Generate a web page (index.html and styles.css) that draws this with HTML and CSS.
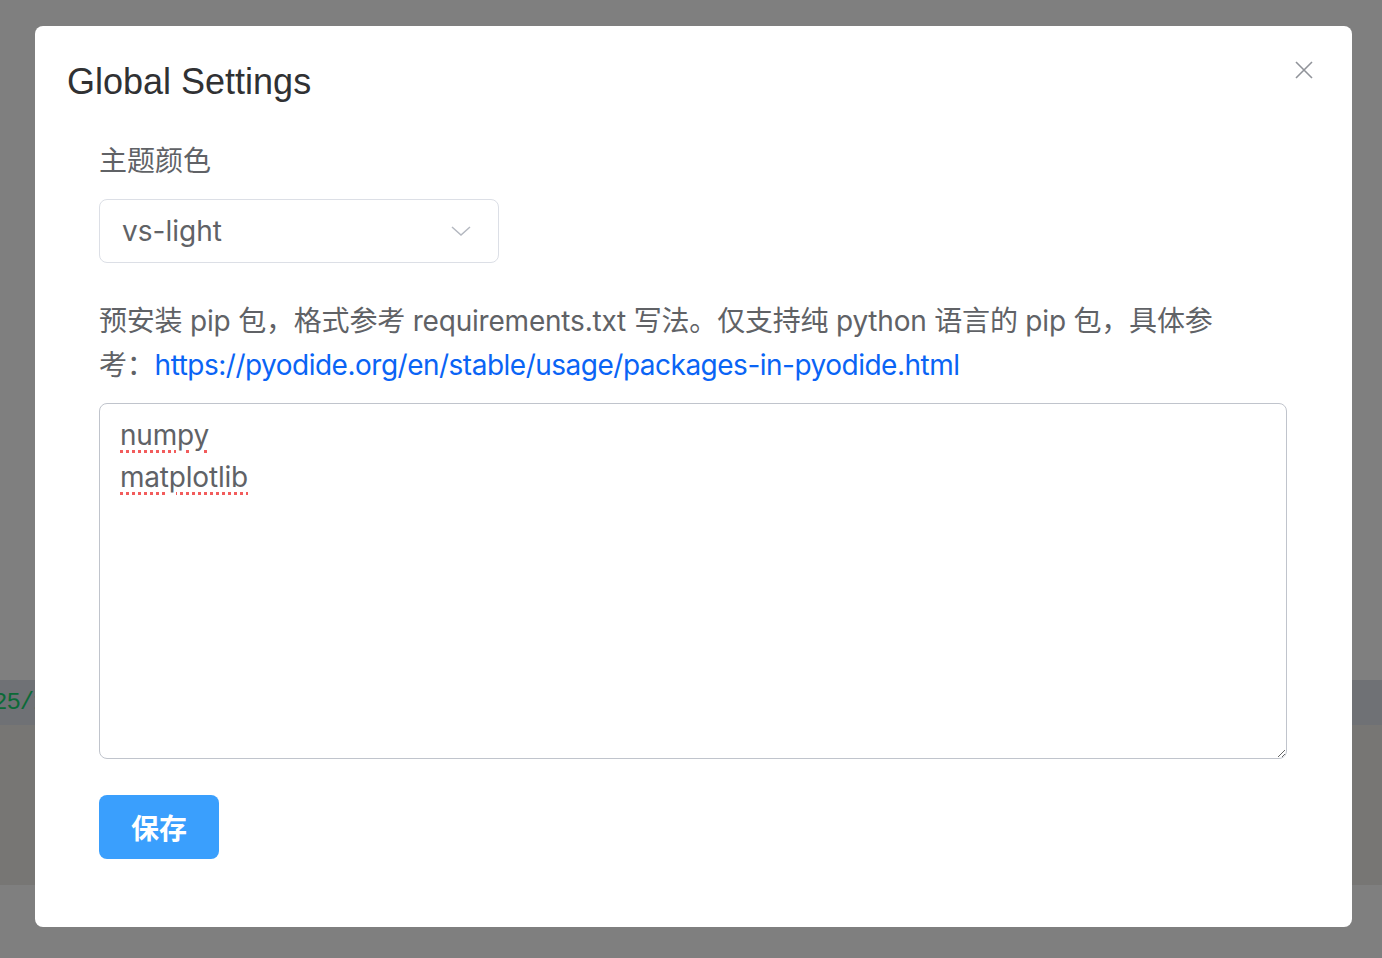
FILE: index.html
```html
<!DOCTYPE html>
<html lang="zh-CN">
<head>
<meta charset="utf-8">
<title>Global Settings</title>
<link rel="stylesheet" href="styles.css">
</head>
<body>
<div class="page">
  <div class="page-top"></div>
  <div class="page-band"><span class="page-code">25/1</span></div>
  <div class="page-mid"></div>
</div>
<div class="overlay">
  <div class="dialog" role="dialog" aria-label="Global Settings">
    <header class="dialog-header">
      <h2 class="dialog-title">Global Settings</h2>
      <button class="dialog-close" aria-label="关闭">
        <svg viewBox="0 0 18 18" width="18" height="18"><path d="M1 1L17 17M17 1L1 17" stroke="#909399" stroke-width="1.6" fill="none"/></svg>
      </button>
    </header>
    <div class="dialog-body">
      <div class="field-label">主题颜色</div>
      <div class="select">
        <span class="select-value">vs-light</span>
        <svg class="select-arrow" viewBox="0 0 20 10" width="20" height="10"><path d="M1 1L10 9L19 1" stroke="#b4b8c0" stroke-width="1.5" fill="none"/></svg>
      </div>
      <p class="desc">预安装 pip 包，格式参考 requirements.txt 写法。仅支持纯 python 语言的 pip 包，具体参考：<a class="desc-link" href="#">https://pyodide.org/en/stable/usage/packages-in-pyodide.html</a></p>
      <textarea class="packages" spellcheck="false">numpy
matplotlib</textarea>
      <button class="btn-primary">保存</button>
    </div>
  </div>
</div>
</body>
</html>
```
FILE: styles.css
```css
* { box-sizing: border-box; }
html, body { margin: 0; height: 100%; }
body {
  background: #7f7f7f;
  font-family: Inter, "Noto Sans CJK SC", sans-serif;
  overflow: hidden;
}
.page-top { height: 680px; }
.page-band {
  height: 45px;
  background: #6f7175;
  display: flex;
  align-items: center;
  overflow: hidden;
}
.page-code {
  font-family: "Liberation Mono", monospace;
  font-size: 24px;
  color: #0b6a37;
  margin-left: -7px;
  letter-spacing: -1px;
}
.page-mid { height: 160px; background: #777674; }

.overlay { position: fixed; inset: 0; }
.dialog {
  position: relative;
  margin: 26px 0 0 35px;
  width: 1317px;
  height: 901px;
  background: #fff;
  border-radius: 8px;
}
.dialog-header { padding: 32px 32px 0; }
.dialog-title {
  margin: 0;
  font-family: "Liberation Sans", Arial, sans-serif;
  font-weight: 400;
  font-size: 36px;
  line-height: 48px;
  color: #303133;
}
.dialog-close {
  position: absolute;
  top: 35px;
  right: 39px;
  width: 18px;
  height: 18px;
  padding: 0;
  border: 0;
  background: none;
  display: flex;
}
.dialog-body {
  padding: 35px 64px 0;
  display: flex;
  flex-direction: column;
  align-items: flex-start;
}
.field-label {
  font-size: 28px;
  line-height: 40px;
  color: #606266;
}
.select {
  margin-top: 18px;
  width: 400px;
  height: 64px;
  border: 1px solid #dcdfe6;
  border-radius: 8px;
  padding: 0 27px 0 22px;
  display: flex;
  align-items: center;
  justify-content: space-between;
}
.select-value { font-size: 28px; color: #606266; }
.desc {
  margin: 36px 0 0;
  max-width: 1140px;
  font-size: 28px;
  line-height: 44px;
  color: #606266;
  letter-spacing: -0.2px;
}
.desc-link { color: #0a64f5; text-decoration: none; letter-spacing: -0.5px; }
.packages {
  margin-top: 16px;
  width: 1188px;
  height: 356px;
  border: 1px solid #c0c4cc;
  border-radius: 8px;
  padding: 10px 20px;
  font-family: Inter, "Noto Sans CJK SC", sans-serif;
  font-size: 28px;
  line-height: 42px;
  color: #606266;
  letter-spacing: -0.2px;
  resize: vertical;
  outline: none;
  text-decoration: underline dotted #f25c5c;
  text-decoration-thickness: 3px;
  text-underline-offset: 5px;
}
.btn-primary {
  margin-top: 36px;
  width: 120px;
  height: 64px;
  border: 0;
  border-radius: 8px;
  background: #3a9ffd;
  color: #fff;
  font-family: "Noto Sans CJK SC", sans-serif;
  font-size: 28px;
  font-weight: 600;
}
```
